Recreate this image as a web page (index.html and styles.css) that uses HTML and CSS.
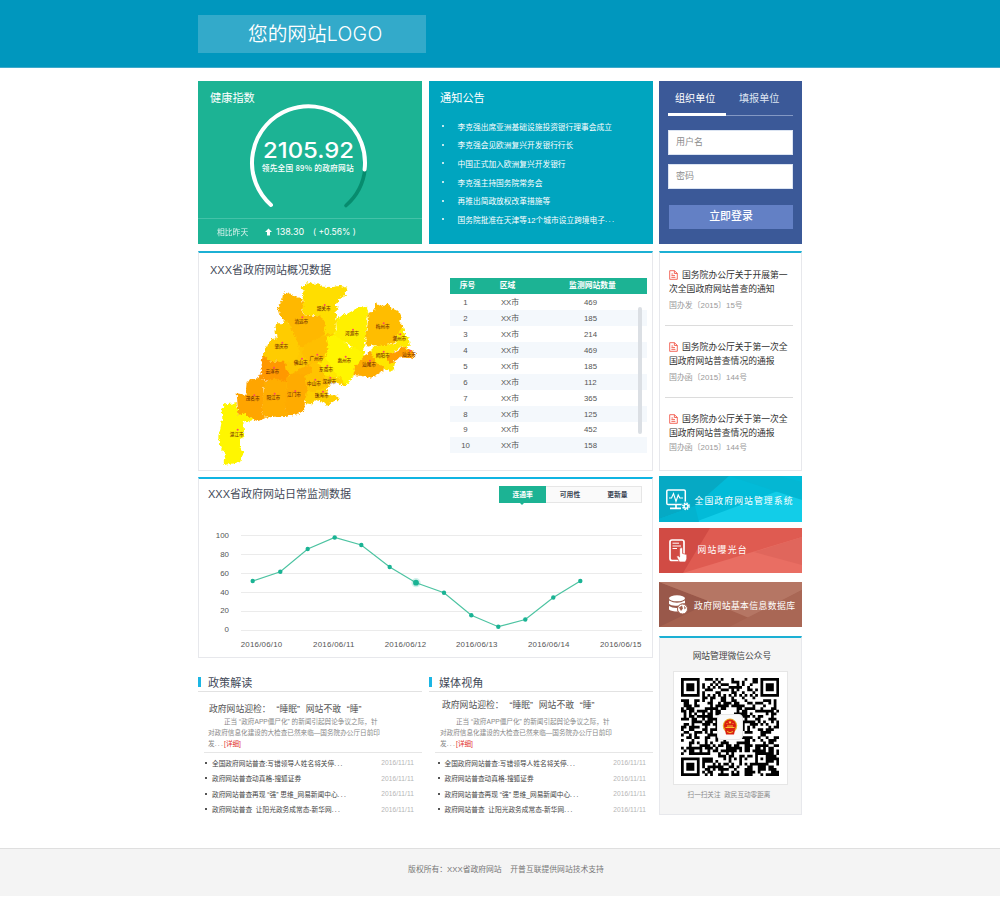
FILE: index.html
```html
<!DOCTYPE html>
<html lang="zh-CN">
<head>
<meta charset="utf-8">
<title>XXX省政府网站</title>
<link rel="stylesheet" href="styles.css">
</head>
<body>
<header class="header"><div class="wrap"><div class="logo">您的网站<span class="logo-latin">LOGO</span></div></div></header>
<main class="wrap main">
  <div class="left">
    <div class="pair">
      <section class="health">
        <h2 class="card-title">健康指数</h2>
        <svg class="gauge" viewBox="198 103 224 115">
          <path d="M365 169A56.5 56.5 0 0 1 346 205.5" fill="none" stroke="#078c6e" stroke-width="3.6" stroke-linecap="round"/>
          <path d="M271 205A56.5 56.5 0 1 1 364.6 169.5" fill="none" stroke="#fff" stroke-width="4" stroke-linecap="round"/>
          <text class="score" x="308.5" y="157.8" textLength="91" lengthAdjust="spacingAndGlyphs">2105.92</text>
          <text class="rank" x="307.7" y="171.4" textLength="92">领先全国 89% 的政府网站</text>
        </svg>
        <div class="compare">
          <span class="compare-label">相比昨天</span>
          <svg class="up" viewBox="0 0 8 8"><path d="M4 0L8 4H5.7V8H2.3V4H0Z" fill="#fff"/></svg>
          <span class="delta">138.30</span><span class="pct">( +0.56% )</span>
        </div>
      </section>
      <section class="notice">
        <h2 class="card-title">通知公告</h2>
        <ul class="notice-list">
          <li>李克强出席亚洲基础设施投资银行理事会成立</li>
          <li>李克强会见欧洲复兴开发银行行长</li>
          <li>中国正式加入欧洲复兴开发银行</li>
          <li>李克强主持国务院常务会</li>
          <li>再推出简政放权改革措施等</li>
          <li>国务院批准在天津等12个城市设立跨境电子<span class="dots">...</span></li>
        </ul>
      </section>
    </div>

    <section class="panel overview">
      <div class="map-col">
        <h2 class="panel-title">XXX省政府网站概况数据</h2>
        <svg class="map" viewBox="60 99 660 570">
          <defs><filter id="coast" x="-5%" y="-5%" width="110%" height="110%" color-interpolation-filters="sRGB"><feTurbulence type="fractalNoise" baseFrequency="0.12" numOctaves="3" seed="4"/><feDisplacementMap in="SourceGraphic" scale="14" xChannelSelector="R" yChannelSelector="G"/></filter></defs>
          <g filter="url(#coast)">
            <path fill="#ffc400" d="M300 220L430 250 440 390 400 450 300 480 250 400Z"/>
            <path fill="#ffde00" d="M332 124L345 122 352 112 370 117 385 115 400 125 430 126 450 122 472 128 464 142 468 150 448 162 436 180 446 192 436 200 440 215 437 235 438 260 430 270 415 265 405 272 402 235 395 218 370 210 345 212 338 200 340 165 336 150 341 138Z"/>
            <path fill="#ffb800" d="M280 142L300 146 318 156 335 160 341 178 336 200 345 212 370 212 395 215 405 235 402 270 385 282 375 292 350 300 335 308 325 300 308 265 305 250 298 235 285 228 268 210 262 190 275 170Z"/>
            <path fill="#ffcc00" d="M258 235L275 235 290 226 305 250 310 265 322 290 330 320 320 347 300 355 285 350 265 350 240 350 220 345 218 330 228 315 235 295 245 283 260 280 256 250Z"/>
            <path fill="#fff000" d="M438 225L455 212 480 202 500 190 530 185 535 205 530 235 528 270 525 295 520 310 525 330 500 325 480 300 450 285 430 270 440 255Z"/>
            <path fill="#fff600" d="M408 275L430 270 450 280 480 305 500 312 525 330 510 350 495 370 490 395 475 415 460 425 450 410 440 395 430 375 420 360 405 340 410 320 415 300Z"/>
            <path fill="#ffbd00" d="M555 170L575 182 595 175 605 190 628 200 635 215 630 235 640 245 635 260 620 275 618 290 590 300 570 305 550 300 530 305 528 270 533 235 535 205 548 200 555 190Z"/>
            <path fill="#ffea00" d="M640 245L643 265 655 280 660 300 650 312 635 300 615 300 618 285 622 272Z"/>
            <path fill="#ffe600" d="M550 305L590 300 618 293 635 302 620 315 600 330 595 345 615 350 612 372 595 378 575 365 555 355 545 330 540 320Z"/>
            <path fill="#ff9d00" d="M590 345L598 328 625 318 635 303 650 312 668 315 675 330 668 342 650 335 630 335 620 345 600 355Z"/>
            <path fill="#ffad00" d="M525 330L545 320 555 350 582 365 580 378 560 390 540 398 520 394 490 390 495 365Z"/>
            <path fill="#ffbf00" d="M345 300L385 280 408 272 412 300 405 340 395 360 375 350 360 357 345 345 335 325Z"/>
            <path fill="#ffc800" d="M330 320L360 355 320 378 300 388 288 370 290 355 320 345Z"/>
            <path fill="#ffae00" d="M325 375L360 358 366 380 345 392 298 392Z"/>
            <path fill="#ffe800" d="M385 355L405 340 430 370 440 395 405 392 395 375Z"/>
            <path fill="#ffd400" d="M400 392L430 395 450 398 468 415 460 424 440 412 420 415 405 405Z"/>
            <path fill="#ffc400" d="M345 395L370 385 395 375 405 400 405 428 390 440 370 445 352 430Z"/>
            <path fill="#ffcf00" d="M350 440L375 440 405 428 415 450 445 452 445 465 425 470 412 484 398 470 375 465 365 478 347 475Z"/>
            <path fill="#ff9800" d="M218 332L240 350 285 350 290 375 298 385 285 415 250 415 225 405 200 402 215 380 215 350Z"/>
            <path fill="#ffa500" d="M170 410L200 400 230 408 220 430 222 460 215 490 225 520 205 528 185 520 165 510 145 510 140 445 170 450 168 430Z"/>
            <path fill="#ffae00" d="M222 412L250 400 287 410 292 450 287 490 292 512 255 515 225 518 215 490 220 460Z"/>
            <path fill="#ffab00" d="M288 398L315 385 345 390 352 430 345 470 342 500 320 508 290 515 285 480 290 445Z"/>
            <path fill="#fff600" d="M105 478L140 475 145 510 165 505 190 524 170 532 160 530 163 575 150 582 150 605 160 625 150 652 100 660 105 625 88 600 85 575 92 545 97 520 95 490Z"/>
          </g>
          <g fill="#ff4668"><circle cx="404" cy="180" r="3"/><circle cx="337" cy="217" r="3"/><circle cx="277" cy="293" r="3"/><circle cx="489" cy="254" r="3"/><circle cx="581" cy="235" r="3"/><circle cx="631" cy="268" r="3"/><circle cx="581" cy="320" r="3"/><circle cx="661" cy="317" r="3"/><circle cx="540" cy="347" r="3"/><circle cx="467" cy="335" r="3"/><circle cx="382" cy="329" r="3"/><circle cx="336" cy="341" r="3"/><circle cx="412" cy="362" r="3"/><circle cx="421" cy="398" r="3"/><circle cx="376" cy="404" r="3"/><circle cx="399" cy="440" r="3"/><circle cx="252" cy="368" r="3"/><circle cx="193" cy="451" r="3"/><circle cx="254" cy="446" r="3"/><circle cx="316" cy="438" r="3"/><circle cx="143" cy="554" r="3"/></g>
          <g class="city"><text x="401" y="195">韶关市</text><text x="334" y="233">清远市</text><text x="274" y="308">肇庆市</text><text x="486" y="269">河源市</text><text x="578" y="250">梅州市</text><text x="628" y="284">潮州市</text><text x="578" y="336">揭阳市</text><text x="657" y="334">汕头市</text><text x="537" y="363">汕尾市</text><text x="463" y="351">惠州市</text><text x="379" y="345">广州市</text><text x="332" y="357">佛山市</text><text x="408" y="378">东莞市</text><text x="418" y="413">深圳市</text><text x="372" y="420">中山市</text><text x="395" y="457">珠海市</text><text x="247" y="384">云浮市</text><text x="188" y="466">茂名市</text><text x="250" y="462">阳江市</text><text x="312" y="454">江门市</text><text x="140" y="572">湛江市</text></g>
        </svg>
      </div>
      <div class="table-box">
        <table class="sites">
          <thead><tr><th>序号</th><th>区域</th><th>监测网站数量</th></tr></thead>
          <tbody>
            <tr><td>1</td><td>XX市</td><td>469</td></tr>
            <tr><td>2</td><td>XX市</td><td>185</td></tr>
            <tr><td>3</td><td>XX市</td><td>214</td></tr>
            <tr><td>4</td><td>XX市</td><td>469</td></tr>
            <tr><td>5</td><td>XX市</td><td>185</td></tr>
            <tr><td>6</td><td>XX市</td><td>112</td></tr>
            <tr><td>7</td><td>XX市</td><td>365</td></tr>
            <tr><td>8</td><td>XX市</td><td>125</td></tr>
            <tr><td>9</td><td>XX市</td><td>452</td></tr>
            <tr><td>10</td><td>XX市</td><td>158</td></tr>
          </tbody>
        </table>
        <i class="scrollbar"></i>
      </div>
    </section>

    <section class="panel monitor">
      <div class="monitor-head">
        <h2 class="panel-title">XXX省政府网站日常监测数据</h2>
        <div class="tabs"><span class="tab tab-on">连通率</span><span class="tab">可用性</span><span class="tab">更新量</span></div>
      </div>
      <svg class="plot" viewBox="199 510 453 146">
        <path d="M241 535.5H642M241 554.5H642M241 573.5H642M241 592.5H642M241 611.5H642M241 630.5H642" stroke="#ebebeb"/>
        <g class="ylab"><text x="229" y="538">100</text><text x="229" y="557">80</text><text x="229" y="576">60</text><text x="229" y="594.5">40</text><text x="229" y="613">20</text><text x="229" y="632">0</text></g>
        <g class="xlab"><text x="240.7" y="646.7" textLength="41.5">2016/06/10</text><text x="313" y="646.7" textLength="41.5">2016/06/11</text><text x="384.7" y="646.7" textLength="41.5">2016/06/12</text><text x="456" y="646.7" textLength="41.5">2016/06/13</text><text x="528" y="646.7" textLength="41.5">2016/06/14</text><text x="600" y="646.7" textLength="41.5">2016/06/15</text></g>
        <polyline points="252.7,581 280.3,571.7 307.7,549 334.7,537.5 361.3,545 389.7,567 416,582.7 444,592.7 471.3,615.3 498.3,626.7 525.3,619.5 553.3,597.5 580.3,581" fill="none" stroke="#4cc3a1" stroke-width="1.2"/>
        <circle cx="416" cy="582.7" r="4.6" fill="#1ab394" opacity=".2"/>
        <g fill="#1ab394"><circle cx="252.7" cy="581" r="2.2"/><circle cx="280.3" cy="571.7" r="2.2"/><circle cx="307.7" cy="549" r="2.2"/><circle cx="334.7" cy="537.5" r="2.2"/><circle cx="361.3" cy="545" r="2.2"/><circle cx="389.7" cy="567" r="2.2"/><circle cx="416" cy="582.7" r="2.9"/><circle cx="444" cy="592.7" r="2.2"/><circle cx="471.3" cy="615.3" r="2.2"/><circle cx="498.3" cy="626.7" r="2.2"/><circle cx="525.3" cy="619.5" r="2.2"/><circle cx="553.3" cy="597.5" r="2.2"/><circle cx="580.3" cy="581" r="2.2"/></g>
      </svg>
    </section>

    <div class="pair news-pair">
      <section class="news">
        <h2 class="news-title">政策解读</h2>
        <div class="lead">
          <h3 class="lead-title">政府网站迎检：<span class="q">“</span>睡眠<span class="q q-end">”</span>网站不敢<span class="q">“</span>睡<span class="q q-end">”</span></h3>
          <p class="lead-text"><span class="indent">正当 “政府APP僵尸化” 的新闻引起舆论争议之际，针</span><br>对政府信息化建设的大检查已然来临—国务院办公厅日前印<br>发<span class="dots">...</span><a class="more">[详细]</a></p>
        </div>
        <ul class="news-list">
          <li><span>全国政府网站普查:写错领导人姓名将关停<span class="dots">...</span></span><time>2016/11/11</time></li>
          <li><span>政府网站普查动真格-搜狐证券</span><time>2016/11/11</time></li>
          <li><span>政府网站普查再现 “强” 思维_网易新闻中心<span class="dots">...</span></span><time>2016/11/11</time></li>
          <li><span>政府网站普查&nbsp; 让阳光政务成常态-新华网<span class="dots">...</span></span><time>2016/11/11</time></li>
        </ul>
      </section>
      <section class="news news-media">
        <h2 class="news-title">媒体视角</h2>
        <div class="lead">
          <h3 class="lead-title">政府网站迎检：<span class="q">“</span>睡眠<span class="q q-end">”</span>网站不敢<span class="q">“</span>睡<span class="q q-end">”</span></h3>
          <p class="lead-text"><span class="indent">正当 “政府APP僵尸化” 的新闻引起舆论争议之际，针</span><br>对政府信息化建设的大检查已然来临—国务院办公厅日前印<br>发<span class="dots">...</span><a class="more">[详细]</a></p>
        </div>
        <ul class="news-list">
          <li><span>全国政府网站普查:写错领导人姓名将关停<span class="dots">...</span></span><time>2016/11/11</time></li>
          <li><span>政府网站普查动真格-搜狐证券</span><time>2016/11/11</time></li>
          <li><span>政府网站普查再现 “强” 思维_网易新闻中心<span class="dots">...</span></span><time>2016/11/11</time></li>
          <li><span>政府网站普查&nbsp; 让阳光政务成常态-新华网<span class="dots">...</span></span><time>2016/11/11</time></li>
        </ul>
      </section>
    </div>
  </div>

  <aside class="right">
    <section class="login">
      <div class="login-tabs"><span class="login-tab login-on">组织单位</span><span class="login-tab">填报单位</span></div>
      <div class="field">用户名</div>
      <div class="field">密码</div>
      <div class="submit">立即登录</div>
    </section>

    <section class="panel docs">
      <article class="doc"><p class="doc-title"><svg class="doc-icon" viewBox="0 0 9 10"><path d="M.7 .7H5.4L8.3 3.3V9.3H.7ZM5.4 .7V3.5H8.3M2.4 4H4.2M2.4 5.6H6M2.4 7.4H6.4" fill="none" stroke="#f25a4c" stroke-width=".9"/></svg>国务院办公厅关于开展第一<br>次全国政府网站普查的通知</p><p class="doc-no">国办发〔2015〕15号</p></article>
      <article class="doc"><p class="doc-title"><svg class="doc-icon" viewBox="0 0 9 10"><path d="M.7 .7H5.4L8.3 3.3V9.3H.7ZM5.4 .7V3.5H8.3M2.4 4H4.2M2.4 5.6H6M2.4 7.4H6.4" fill="none" stroke="#f25a4c" stroke-width=".9"/></svg>国务院办公厅关于第一次全<br>国政府网站普查情况的通报</p><p class="doc-no">国办函〔2015〕144号</p></article>
      <article class="doc"><p class="doc-title"><svg class="doc-icon" viewBox="0 0 9 10"><path d="M.7 .7H5.4L8.3 3.3V9.3H.7ZM5.4 .7V3.5H8.3M2.4 4H4.2M2.4 5.6H6M2.4 7.4H6.4" fill="none" stroke="#f25a4c" stroke-width=".9"/></svg>国务院办公厅关于第一次全<br>国政府网站普查情况的通报</p><p class="doc-no">国办函〔2015〕144号</p></article>
    </section>

    <svg class="banner b1" viewBox="0 0 143 46">
      <rect width="143" height="46" fill="#02bbd8"/><path d="M0 0H70L36 30 0 43Z" fill="#06a9c4"/><path d="M143 6L36 46H143Z" fill="#12cde8"/><path d="M70 0L143 24V6L120 0Z" fill="#04b7d3"/><path d="M36 30L0 43V46H40Z" fill="#03b3cf"/>
      <g fill="none" stroke="#fff"><rect x="7.8" y="14" width="18.5" height="14.5" rx="1.3" stroke-width="1.5"/><path d="M10 22H12.5L14.5 17.5 17 25.5 19.2 19 20.8 22H24" stroke-width="1.1"/><path d="M17 28.5V32M11 32.3H22" stroke-width="1.7"/></g>
      <circle cx="27" cy="30.3" r="4.8" fill="#08b2cd"/><circle cx="27" cy="30.3" r="3.1" fill="none" stroke="#fff" stroke-width="1.6" stroke-dasharray="1.5 .93"/><circle cx="27" cy="30.3" r="1.9" fill="none" stroke="#fff" stroke-width="1.3"/>
      <text class="banner-text" x="35.5" y="28" textLength="98">全国政府网站管理系统</text>
    </svg>
    <svg class="banner b2" viewBox="0 0 143 45">
      <rect width="143" height="45" fill="#df5b51"/><path d="M0 0H51L24 45H0Z" fill="#d14b44"/><path d="M143 9L24 45H143Z" fill="#e96e63"/><path d="M143 9L95 24 143 37Z" fill="#e0665c"/>
      <g fill="none" stroke="#fff"><rect x="11" y="12" width="14" height="20.5" rx="2" stroke-width="1.7"/><path d="M13.5 15.2H20M13.5 18H22M13.5 20.5H18" stroke-width="1"/></g>
      <path d="M20.5 34L17.5 28.5 19.2 27.7 20.6 29V20.4Q22.3 18.8 23.6 20.4V25.4L27.8 26.6V31L26.4 34Z" fill="#fff" stroke="#d14b44" stroke-width=".7"/>
      <text class="banner-text" x="38.5" y="25" textLength="49">网站曝光台</text>
    </svg>
    <svg class="banner b3" viewBox="0 0 143 45">
      <rect width="143" height="45" fill="#a5614f"/><path d="M0 0L52 20 0 45Z" fill="#99584a"/><path d="M0 0H143V8L90 36 52 20Z" fill="#b57664"/><path d="M143 8V45H70Z" fill="#a96755"/>
      <g fill="#fff"><ellipse cx="18" cy="16.3" rx="8" ry="3"/><path d="M10 18.5Q18 23 26 18.5V21.2Q22 21 20 23.5 12.5 24.5 10 22ZM10 24Q13.5 26.3 18.5 26Q18 28 19 29.5Q12.5 29.5 10 27.5Z"/><circle cx="23.5" cy="27" r="5" stroke="#a5614f"/></g>
      <path d="M20 25.5L23 23.5 24 26.5 22 29ZM25 23.5L27 26 25.5 27.5ZM24 29.5L26 29" fill="#a5614f"/>
      <text class="banner-text" x="35" y="27" textLength="101">政府网站基本信息数据库</text>
    </svg>

    <section class="panel wechat">
      <h2 class="wechat-title">网站管理微信公众号</h2>
      <div class="qr-box">
        <svg id="qr" class="qr" viewBox="0 0 37 37"></svg>
        <svg class="emblem" viewBox="0 0 26 26"><rect x=".5" y=".5" width="25" height="25" rx="3.5" fill="#fafafa" stroke="#e6e6e6"/><circle cx="13" cy="11.8" r="7.2" fill="#e9a822"/><circle cx="13" cy="11.5" r="6" fill="#db1b12"/><path d="M8 16L10 14H16L18 16 17 20.5H9Z" fill="#d9200f"/><path d="M8.5 13.5H17.5M10 12H16M10 17.5Q13 20 16 17.5" stroke="#f5c431" fill="none"/><path d="M13 6.6L13.5 7.8H14.8L13.8 8.6 14.2 9.8 13 9 11.8 9.8 12.2 8.6 11.2 7.8H12.5Z" fill="#ffd83a"/><g fill="#ffd83a"><circle cx="10" cy="9.5" r=".5"/><circle cx="16" cy="9.5" r=".5"/></g></svg>
      </div>
      <p class="scan">扫一扫关注&nbsp; 政民互动零距离</p>
    </section>
  </aside>
</main>
<footer class="footer">版权所有：XXX省政府网站 &nbsp;&nbsp; 开普互联提供网站技术支持</footer>
<script src="qr.js"></script>
</body>
</html>
```
FILE: styles.css
```css
* { box-sizing: border-box; }
body { margin: 0; height: 898px; background: #fff; color: #444; font-family: "Liberation Sans", "Noto Sans CJK SC", sans-serif; font-size: 8px; white-space: nowrap; overflow: hidden; }
h2, h3, p, ul { margin: 0; padding: 0; font-weight: 400; list-style: none; }
svg { display: block; }
.wrap { width: 604px; margin-left: 198px; }
.header { height: 68px; padding-top: 15px; background: #0097be; border-bottom: 1px solid #3fa9cb; }
.logo { width: 228px; height: 38px; padding-left: 50px; background: #33aaca; color: #fff; font-family: "Noto Sans CJK SC", sans-serif; font-size: 19.7px; line-height: 36px; font-weight: 350; }
.logo-latin { font-family: Inter, sans-serif; font-weight: 300; font-size: 19.5px; letter-spacing: .3px; }
.main { display: flex; gap: 6px; height: 780px; padding-top: 13px; }
.left { width: 455px; }
.right { width: 143px; }
.pair { display: flex; gap: 7px; }
.pair > section { width: 224px; }
.dots { letter-spacing: 1.3px; }

.health, .notice { height: 163px; padding-top: 10px; color: #fff; }
.health { background: #1cb394; }
.card-title { padding-left: 12px; font-size: 11.2px; line-height: 15px; }
.notice .card-title { padding-left: 11px; }
.gauge { width: 224px; height: 115px; margin-top: -3px; }
.score { fill: #fff; font: 500 22px Inter, sans-serif; text-anchor: middle; }
.rank { fill: #fff; font: 500 7.7px "Noto Sans CJK SC", sans-serif; text-anchor: middle; }
.compare { display: flex; align-items: center; height: 26px; padding-left: 19px; border-top: 1px solid #43c2a8; font: 9px/24px Inter, "Noto Sans CJK SC", sans-serif; }
.compare-label { width: 48px; font-size: 7.8px; opacity: .85; }
.up { width: 7px; height: 8px; margin-right: 4px; }
.delta { width: 37px; }
.pct { font-size: 8.5px; }

.notice { background: #00a5bf; }
.notice-list { padding: 10.7px 0 0 13px; }
.notice-list li { display: flex; align-items: center; height: 18.7px; font-size: 7.72px; }
.notice-list li::before { content: ""; width: 2px; height: 2px; margin-right: 13.5px; background: #fff; border-radius: 1px; }

.login { height: 163px; padding: 0 9px; background: #3b5998; color: #fff; }
.login-tabs { display: flex; height: 35px; margin-bottom: 14px; border-bottom: 1px solid #8398c4; }
.login-tab { width: 58px; height: 35px; padding-left: 7px; font-size: 10.1px; line-height: 36px; color: #dde4f1; }
.login-tab + .login-tab { padding-left: 13px; }
.login-on { border-bottom: 3px solid #fff; color: #fff; }
.field { height: 25px; margin-bottom: 9px; padding-left: 7px; background: #fff; color: #8d8d8d; font-size: 9px; line-height: 23px; border: 1px solid #dbe4f2; }
.submit { height: 24px; margin-top: 16px; margin-left: 1px; background: #6380c5; font-size: 10.9px; font-weight: 500; line-height: 23px; text-align: center; }

.panel { border: 1px solid #e7e8ec; border-top: 2px solid #1cb0d4; background: #fff; }
.panel-title { font-size: 11px; line-height: 16px; color: #434a58; }
.overview { display: flex; height: 220px; margin-top: 7px; }
.map-col { width: 251px; padding: 9px 0 0 11px; }
.map { width: 220px; height: 190px; }
.city { fill: #7a3600; font: 500 13.8px "Noto Sans CJK SC", sans-serif; text-anchor: middle; }
.table-box { position: relative; width: 197px; padding-top: 24.5px; }
.sites { width: 197px; table-layout: fixed; border-collapse: collapse; font-size: 7.8px; line-height: 12px; text-align: center; color: #555; }
.sites th { height: 16.5px; padding: 0; background: #1cb394; color: #fff; font-weight: 700; }
.sites th:first-child { width: 31px; padding-left: 4px; }
.sites th:nth-child(2) { width: 53px; }
.sites th:nth-child(3) { padding-left: 4px; }
.sites td { height: 15.95px; padding: 2px 0 0; }
.sites td:nth-child(2) { padding-left: 5px; }
.sites tbody tr:nth-child(even) { background: #f4f8fc; }
.scrollbar { position: absolute; right: 5px; top: 54px; width: 4px; height: 127px; border-radius: 2px; background: #dbdfe4; }

.monitor { height: 181px; margin-top: 6px; border-top-color: #10b4e2; }
.monitor-head { display: flex; justify-content: space-between; height: 31px; padding: 7px 10px 0 9px; }
.monitor-head .panel-title { line-height: 17px; }
.tabs { display: flex; width: 143px; height: 17px; border: 1px solid #e6e6e6; background: #fafafa; }
.tab { width: 47.5px; font-size: 6.8px; font-weight: 700; line-height: 15px; text-align: center; color: #3c4555; }
.tab-on { position: relative; height: 17px; margin: -1px 0 0 -1px; background: #1cb394; color: #fff; line-height: 17px; }
.tab-on::after { content: ""; position: absolute; left: 21px; top: 17px; border: 2.5px solid transparent; border-top-color: #1cb394; }
.plot { width: 453px; height: 146px; }
.ylab, .xlab { fill: #555; font: 7.9px "Liberation Sans", sans-serif; }
.ylab { text-anchor: end; }

.news-pair { margin-top: 16px; }
.news-title { display: flex; align-items: center; height: 18px; padding-bottom: 2px; border-bottom: 1px solid #e2e2e2; font-size: 11.1px; color: #434a58; }
.news-title::before { content: ""; width: 3px; height: 10px; margin-right: 7px; background: #1cb6e4; }
.lead { height: 61px; margin-left: 6px; padding: 10px 0 0 4px; border-bottom: 1px solid #e6e6e6; }
.lead-title { height: 14px; padding-left: 1px; font-size: 8.8px; line-height: 14px; color: #555; }
.q { display: inline-block; width: 8.8px; text-align: right; }
.q-end { text-align: left; }
.lead-text { font-size: 6.62px; line-height: 11px; color: #888; }
.indent { padding-left: 16px; }
.more { color: #e2332e; }
.news-list { padding: 2px 8px 0 7px; }
.news-list li { display: flex; align-items: center; height: 15.5px; font-size: 6.7px; color: #444; }
.news-list li::before { content: ""; width: 2px; height: 2px; margin-right: 5px; background: #555; }
.news-list time { margin-left: auto; font-size: 6.6px; letter-spacing: .07px; color: #b5b5b5; }
.news-media .lead { padding-left: 5px; padding-top: 6px; }
.news-media .lead-title { height: 18px; padding-left: 2px; }
.news-media .news-list { padding-left: 8.5px; padding-right: 7px; }

.docs { height: 220px; margin-top: 7px; padding: 15px 8px 0 5px; }
.doc { height: 58px; margin-bottom: 14px; padding-left: 4px; border-bottom: 1px solid #dcdcdc; }
.doc:last-child { border: 0; }
.doc-title { font-size: 8.8px; line-height: 14px; color: #333; }
.doc-icon { display: inline-block; width: 9px; height: 10px; margin-right: 4px; vertical-align: -2px; }
.doc-no { padding-top: 2.5px; font-size: 7.9px; line-height: 13px; color: #999; }
.doc:last-child .doc-no { padding-top: 1px; }

.banner { width: 143px; }
.banner-text { fill: #fff; font: 8.8px "Noto Sans CJK SC", sans-serif; }
.b1 { height: 46px; margin-top: 5px; }
.b2 { height: 45px; margin-top: 6px; }
.b3 { height: 45px; margin-top: 9px; }

.wechat { height: 179px; margin-top: 9px; background: #f5f5f5; text-align: center; }
.wechat-title { padding: 9px 0 0 3px; font-size: 8.75px; line-height: 19px; color: #444; }
.qr-box { position: relative; width: 115px; height: 114px; margin: 5px 0 0 13px; padding: 6px 7px; border: 1px solid #e6e6e6; background: #fff; }
.qr { width: 98px; height: 98px; }
.emblem { position: absolute; left: 43px; top: 42px; width: 26px; height: 26px; }
.scan { padding-top: 2px; padding-right: 3px; font-size: 6.6px; line-height: 16px; color: #888; }

.footer { height: 48px; padding-left: 12px; border-top: 1px solid #dfdfdf; background: #f4f4f4; color: #777; font-size: 7.8px; line-height: 41px; text-align: center; }
```
FILE: qr.js
```js
// Draws the account code as 37 x 37 modules.
(function () {
  var n = 37, seed = 20150, d = '';
  function rnd() { seed = (seed * 1103515245 + 12345) % 2147483648; return seed / 2147483648; }
  function square(x, y, cx, cy, rings) {
    var r = Math.max(Math.abs(x - cx), Math.abs(y - cy));
    return r > rings.length - 1 ? null : rings[r];
  }
  for (var y = 0; y < n; y++) {
    for (var x = 0; x < n; x++) {
      var on = rnd() < 0.52 ? 1 : 0;
      var finder = [1, 1, 0, 1, 0], f = [[3, 3], [33, 3], [3, 33]];
      if (x === 6 || y === 6) on = (x + y + 1) % 2;
      for (var i = 0; i < 3; i++) {
        var v = square(x, y, f[i][0], f[i][1], finder);
        if (v !== null) on = v;
      }
      var a = square(x, y, 30, 30, [1, 0, 1]);
      if (a !== null) on = a;
      if (on) d += 'M' + x + ' ' + y + 'h1.04v1.04h-1.04z';
    }
  }
  var p = document.createElementNS('http://www.w3.org/2000/svg', 'path');
  p.setAttribute('d', d);
  document.getElementById('qr').appendChild(p);
})();
```
